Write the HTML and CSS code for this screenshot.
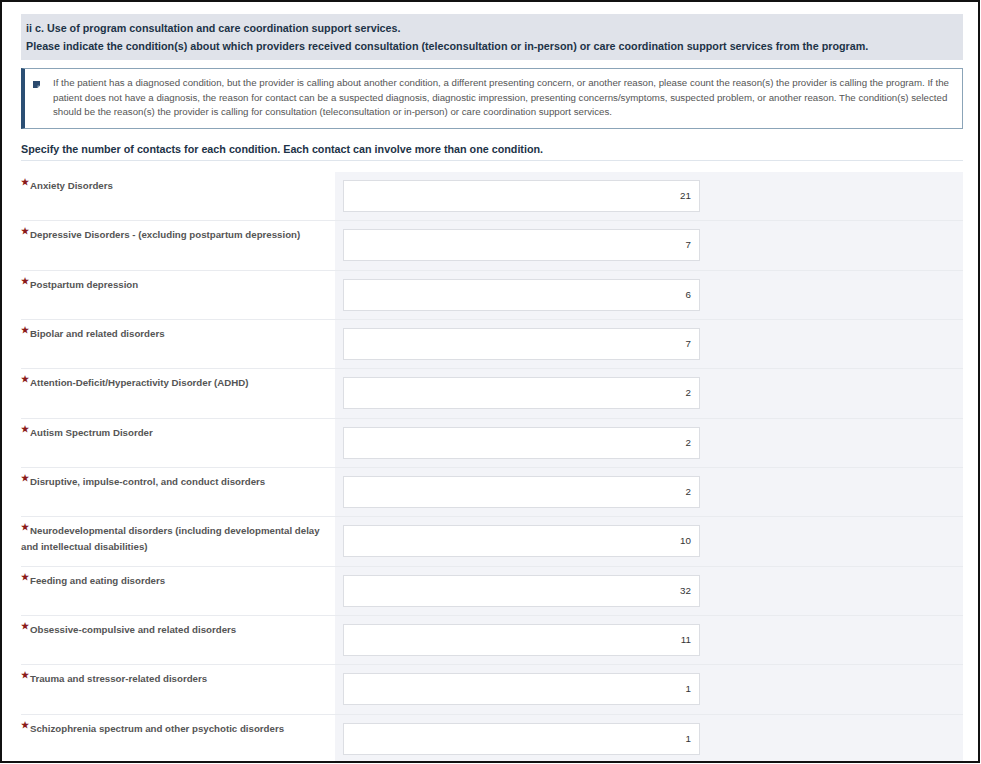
FILE: index.html
```html
<!DOCTYPE html>
<html lang="en">
<head>
<meta charset="utf-8">
<title>Condition contacts</title>
<link rel="stylesheet" href="styles.css">
</head>
<body>
<div class="frame">
  <div class="content">
    <div class="section-head">
      <div>ii c. Use of program consultation and care coordination support services.</div>
      <div>Please indicate the condition(s) about which providers received consultation (teleconsultation or in-person) or care coordination support services from the program.</div>
    </div>
    <div class="info">
      <svg class="info-icon" width="7" height="7" viewBox="0 0 7 7" aria-hidden="true"><path d="M0 0H7V4.5L4.5 7H0Z" fill="#2b4a6e"/><path d="M4.5 7V4.5H7Z" fill="#8fa3b8"/></svg>
      <p>If the patient has a diagnosed condition, but the provider is calling about another condition, a different presenting concern, or another reason, please count the reason(s) the provider is calling the program. If the patient does not have a diagnosis, the reason for contact can be a suspected diagnosis, diagnostic impression, presenting concerns/symptoms, suspected problem, or another reason. The condition(s) selected should be the reason(s) the provider is calling for consultation (teleconsultation or in-person) or care coordination support services.</p>
    </div>
    <div class="specify">Specify the number of contacts for each condition. Each contact can involve more than one condition.</div>
    <div class="rows">
      <div class="row"><div class="label"><span class="req">&#9733;</span>Anxiety Disorders</div><div class="field"><div class="input">21</div></div></div>
      <div class="row"><div class="label"><span class="req">&#9733;</span>Depressive Disorders - (excluding postpartum depression)</div><div class="field"><div class="input">7</div></div></div>
      <div class="row"><div class="label"><span class="req">&#9733;</span>Postpartum depression</div><div class="field"><div class="input">6</div></div></div>
      <div class="row"><div class="label"><span class="req">&#9733;</span>Bipolar and related disorders</div><div class="field"><div class="input">7</div></div></div>
      <div class="row"><div class="label"><span class="req">&#9733;</span>Attention-Deficit/Hyperactivity Disorder (ADHD)</div><div class="field"><div class="input">2</div></div></div>
      <div class="row"><div class="label"><span class="req">&#9733;</span>Autism Spectrum Disorder</div><div class="field"><div class="input">2</div></div></div>
      <div class="row"><div class="label"><span class="req">&#9733;</span>Disruptive, impulse-control, and conduct disorders</div><div class="field"><div class="input">2</div></div></div>
      <div class="row"><div class="label"><span class="req">&#9733;</span>Neurodevelopmental disorders (including developmental delay and intellectual disabilities)</div><div class="field"><div class="input">10</div></div></div>
      <div class="row"><div class="label"><span class="req">&#9733;</span>Feeding and eating disorders</div><div class="field"><div class="input">32</div></div></div>
      <div class="row"><div class="label"><span class="req">&#9733;</span>Obsessive-compulsive and related disorders</div><div class="field"><div class="input">11</div></div></div>
      <div class="row"><div class="label"><span class="req">&#9733;</span>Trauma and stressor-related disorders</div><div class="field"><div class="input">1</div></div></div>
      <div class="row"><div class="label"><span class="req">&#9733;</span>Schizophrenia spectrum and other psychotic disorders</div><div class="field"><div class="input">1</div></div></div>
    </div>
  </div>
</div>
</body>
</html>
```
FILE: styles.css
```css
html, body {
  margin: 0;
  padding: 0;
  background: #fff;
}
body {
  font-family: "Liberation Sans", Arial, sans-serif;
}
.frame {
  box-sizing: border-box;
  width: 980px;
  height: 763px;
  border: 2px solid #111;
  overflow: hidden;
  background: #fff;
}
.content {
  padding: 12px 15px 0 19px;
}
.section-head {
  background: #e0e3ea;
  color: #1d3347;
  font-weight: bold;
  font-size: 10.75px;
  line-height: 18px;
  padding: 5px 5px 5px;
}
.info {
  margin-top: 8px;
  display: flex;
  align-items: flex-start;
  border: 1px solid #8ba4b8;
  border-left: 4px solid #2b4f74;
  padding: 7px 12px 8px 8px;
}
.info-icon {
  flex: none;
  margin-top: 5px;
  margin-right: 13px;
}
.info p {
  margin: 0;
  color: #555;
  font-size: 9.7px;
  line-height: 14.7px;
}
.specify {
  margin-top: 11px;
  color: #1d3347;
  font-weight: bold;
  font-size: 10.75px;
  line-height: 18px;
  padding-bottom: 2px;
  border-bottom: 1px solid #dfe5ec;
}
.rows {
  margin-top: 11px;
}
.row {
  display: grid;
  grid-template-columns: 314px 1fr;
  height: 49.33px;
  box-sizing: border-box;
  border-bottom: 1px solid #e9ebef;
}
.label {
  color: #555;
  font-weight: bold;
  font-size: 9.7px;
  line-height: 16px;
  padding: 6px 14px 0 0;
}
.req {
  color: #8b1a1a;
  font-size: 8.5px;
  vertical-align: top;
  line-height: 9px;
  margin-right: 1px;
}
.field {
  background: #f3f4f8;
  padding: 8px 0 0 8px;
}
.input {
  box-sizing: border-box;
  width: 357px;
  height: 32px;
  background: #fff;
  border: 1px solid #dcdee3;
  color: #333;
  font-size: 9.8px;
  line-height: 30px;
  text-align: right;
  padding-right: 8px;
}
```
